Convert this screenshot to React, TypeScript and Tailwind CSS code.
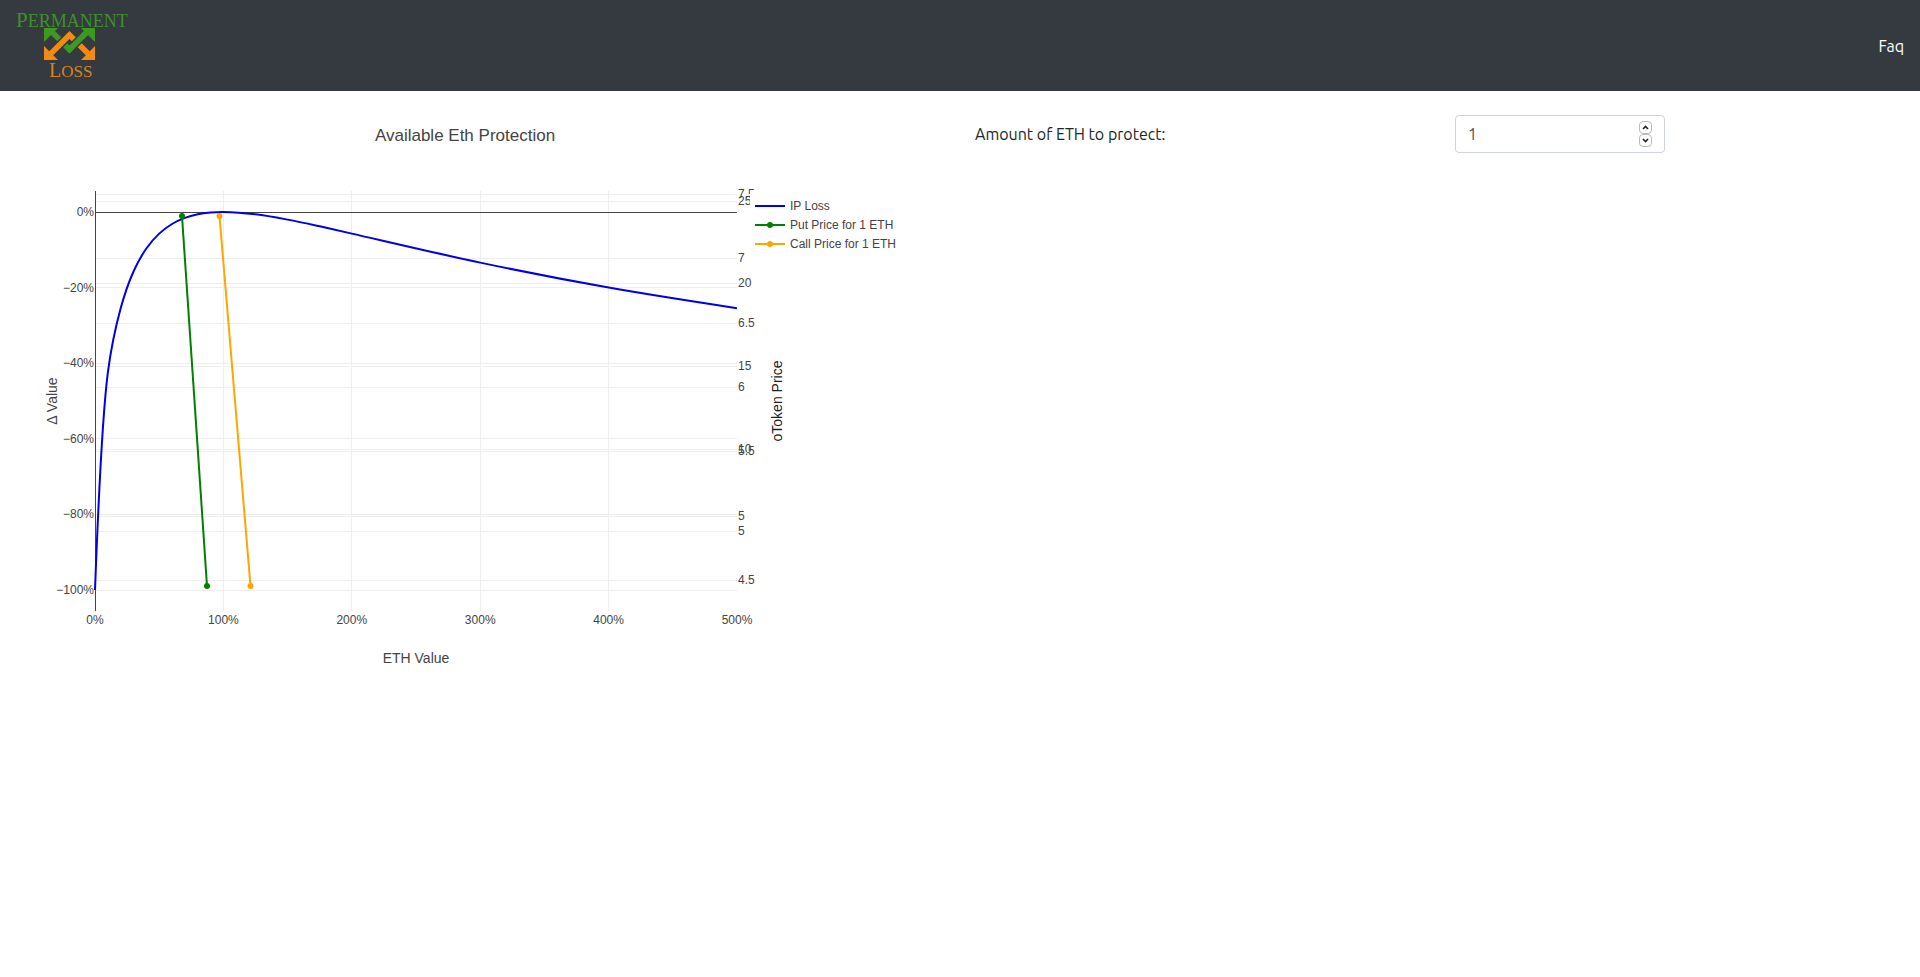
import { useState } from "react";

const X0 = 80;
const X1 = 722;
const TOP = 100;
const BOTTOM = 520;

const xAt = (ratio: number) => X0 + ratio * 128.4;
const yAt = (percent: number) => 121 - percent * 3.78;

type Point = [number, number];

// Control points on either side of `mid` for a centripetal Catmull-Rom spline.
function tangent(prev: Point, mid: Point, next: Point): [Point, Point] {
  const a = [prev[0] - mid[0], prev[1] - mid[1]];
  const b = [next[0] - mid[0], next[1] - mid[1]];
  const da = Math.sqrt(Math.hypot(a[0], a[1]));
  const db = Math.sqrt(Math.hypot(b[0], b[1]));
  const nx = db * db * a[0] - da * da * b[0];
  const ny = db * db * a[1] - da * da * b[1];
  const before = 3 * db * (da + db);
  const after = 3 * da * (da + db);
  return [
    [mid[0] + nx / before, mid[1] + ny / before],
    [mid[0] - nx / after, mid[1] - ny / after],
  ];
}

function splinePath(points: Point[]): string {
  const last = points.length - 1;
  const tangents = points
    .slice(1, last)
    .map((p, i) => tangent(points[i], p, points[i + 2]));
  let d = `M${points[0]}Q${tangents[0][0]} ${points[1]}`;
  for (let i = 2; i < last; i++) {
    d += `C${tangents[i - 2][1]} ${tangents[i - 1][0]} ${points[i]}`;
  }
  return `${d}Q${tangents[last - 2][1]} ${points[last]}`;
}

const ratios = [
  0, 0.1, 0.2, 0.3, 0.4, 0.5, 0.6, 0.7, 0.8, 0.9, 1, 1.25, 1.5, 1.75, 2, 3, 4, 5,
];
const lossPath = splinePath(
  ratios.map((r): Point => [xAt(r), yAt(((2 * Math.sqrt(r)) / (1 + r) - 1) * 100)]),
);

const xTicks = [0, 100, 200, 300, 400, 500];
const yTicks = [0, -20, -40, -60, -80, -100];
const priceTicks = [
  { label: "7.5", y: 103 },
  { label: "25", y: 110 },
  { label: "7", y: 167 },
  { label: "20", y: 192 },
  { label: "6.5", y: 232 },
  { label: "15", y: 275 },
  { label: "6", y: 296 },
  { label: "10", y: 358 },
  { label: "5.5", y: 360 },
  { label: "5", y: 425 },
  { label: "5", y: 440 },
  { label: "4.5", y: 489 },
];

const priceSeries = [
  { color: "#008000", from: [167, 125], to: [192, 495] },
  { color: "#ffa500", from: [204.5, 125], to: [235.5, 495] },
];

function Logo() {
  return (
    <svg width="116" height="79" viewBox="0 0 116 79" role="img" aria-label="Permanent Loss">
      <g fontFamily='"Liberation Serif", serif'>
        <text x="0" y="21" fontSize="21" fill="#3f8f2b">
          P<tspan fontSize="18">ERMANENT</tspan>
        </text>
        <text x="33" y="71" fontSize="20" fill="#d5831d">
          L<tspan fontSize="17">OSS</tspan>
        </text>
      </g>
      <g fill="none" strokeWidth="5.500">
        <path d="M34 24L53.500 43.500L73 24" stroke="#3c9a22" />
        <path d="M41 41.500L51 31.500" stroke="#343a40" strokeWidth="8.500" />
        <path d="M34 48.500L53.500 29L73 48.500" stroke="#f48a12" />
        <path d="M56 41L66 31" stroke="#343a40" strokeWidth="8.500" />
        <path d="M51 41L53.500 43.500L73 24" stroke="#3c9a22" />
      </g>
      <path d="M28 22h14L28 36zM79 22v14L65 22z" fill="#3c9a22" />
      <path d="M28 54V40l14 14zM79 54H65l14-14z" fill="#f48a12" />
    </svg>
  );
}

function Chart({ amount }: { amount: string }) {
  const legend = [
    { label: "IP Loss", color: "#0000e6", marker: false },
    { label: `Put Price for ${amount} ETH`, color: "#008000", marker: true },
    { label: `Call Price for ${amount} ETH`, color: "#ffa500", marker: true },
  ];
  return (
    <svg
      viewBox="0 0 930 600"
      className="block h-auto w-full"
      fontFamily='"Liberation Sans", Arial, sans-serif'
      fontSize="12"
      fill="#444"
      role="img"
      aria-label="Available Eth Protection"
    >
      <text x="450" y="50" fontSize="17" textAnchor="middle">
        Available Eth Protection
      </text>

      <g stroke="#eee" shapeRendering="crispEdges">
        {xTicks.slice(1, 5).map((t) => (
          <line key={t} x1={xAt(t / 100)} x2={xAt(t / 100)} y1={TOP} y2={BOTTOM} />
        ))}
        {yTicks.slice(1).map((t) => (
          <line key={t} x1={X0} x2={X1} y1={yAt(t)} y2={yAt(t)} />
        ))}
        {priceTicks.map((t) => (
          <line key={t.y} x1={X0} x2={X1} y1={t.y + 0.5} y2={t.y + 0.5} />
        ))}
      </g>
      <g fill="#444" shapeRendering="crispEdges">
        <rect x={X0} y="121" width={X1 - X0} height="1" />
        <rect x={X0} y={TOP} width="1" height={BOTTOM - TOP} />
      </g>

      <path d={lossPath} fill="none" stroke="#0000e6" strokeWidth="2" />
      {priceSeries.map((s) => (
        <g key={s.color} fill={s.color}>
          <line
            x1={s.from[0]}
            y1={s.from[1]}
            x2={s.to[0]}
            y2={s.to[1]}
            stroke={s.color}
            strokeWidth="2"
          />
          <circle cx={s.from[0]} cy={s.from[1]} r="3" />
          <circle cx={s.to[0]} cy={s.to[1]} r="3" />
        </g>
      ))}

      {xTicks.map((t) => (
        <text key={t} x={xAt(t / 100)} y="533" textAnchor="middle">
          {t}%
        </text>
      ))}
      {yTicks.map((t) => (
        <text key={t} x="79" y={yAt(t) + 4} textAnchor="end">
          {t < 0 ? `−${-t}` : t}%
        </text>
      ))}
      {priceTicks.map((t) => (
        <text key={t.y} x="723" y={t.y + 4}>
          {t.label}
        </text>
      ))}

      <text x="401" y="572" fontSize="14" textAnchor="middle">
        ETH Value
      </text>
      <text transform="translate(42 310) rotate(-90)" fontSize="14" textAnchor="middle">
        Δ Value
      </text>
      <text
        transform="translate(767 310) rotate(-90)"
        fontSize="14"
        textAnchor="middle"
        fill="#222"
      >
        oToken Price
      </text>

      <rect x="735" y="100" width="152" height="67" fill="#fff" />
      {legend.map((item, i) => (
        <g key={item.color} transform={`translate(740 ${115 + i * 19})`}>
          <line x2="30" stroke={item.color} strokeWidth="2" />
          {item.marker && <circle cx="15" r="3" fill={item.color} />}
          <text x="35" y="4">
            {item.label}
          </text>
        </g>
      ))}
    </svg>
  );
}

function Chevron({ up }: { up?: boolean }) {
  return (
    <svg width="7" height="5" viewBox="0 0 7 5" fill="none" stroke="#222" strokeWidth="1.600">
      <path d={up ? "M1 4l2.500-2.500L6 4" : "M1 1l2.500 2.500L6 1"} />
    </svg>
  );
}

export default function App() {
  const [amount, setAmount] = useState("1");
  const step = (by: number) => setAmount(String(Math.max(0, Number(amount) + by)));
  const spin =
    "flex h-[13px] w-[13px] items-center justify-center rounded-[4px] border border-[#bbb] bg-white";

  return (
    <div className='min-h-screen bg-white font-["Ubuntu","Noto_Sans",sans-serif] text-base text-[#212529]'>
      <header className="flex h-[91px] items-center justify-between bg-[#343a40] px-4">
        <a href="#home">
          <Logo />
        </a>
        <nav>
          <a href="#faq" className="text-white">
            Faq
          </a>
        </nav>
      </header>
      <main className="grid grid-cols-2">
        <section className="px-[15px]">
          <Chart amount={amount} />
        </section>
        <section className="grid grid-cols-4 items-center self-start pt-6">
          <label htmlFor="amount" className="col-span-2 px-[15px]">
            Amount of ETH to protect:
          </label>
          <div className="px-[15px]">
            <div className="relative">
              <input
                id="amount"
                type="number"
                min="0"
                value={amount}
                onChange={(e) => setAmount(e.target.value)}
                className="block h-[38px] w-full appearance-none rounded border border-[#ced4da] bg-white px-3 text-[#495057] [appearance:textfield] [&::-webkit-inner-spin-button]:appearance-none"
              />
              <div className="absolute inset-y-0 right-[13px] flex flex-col justify-center">
                <button type="button" aria-label="Increase" onClick={() => step(1)} className={spin}>
                  <Chevron up />
                </button>
                <button type="button" aria-label="Decrease" onClick={() => step(-1)} className={spin}>
                  <Chevron />
                </button>
              </div>
            </div>
          </div>
        </section>
      </main>
    </div>
  );
}
